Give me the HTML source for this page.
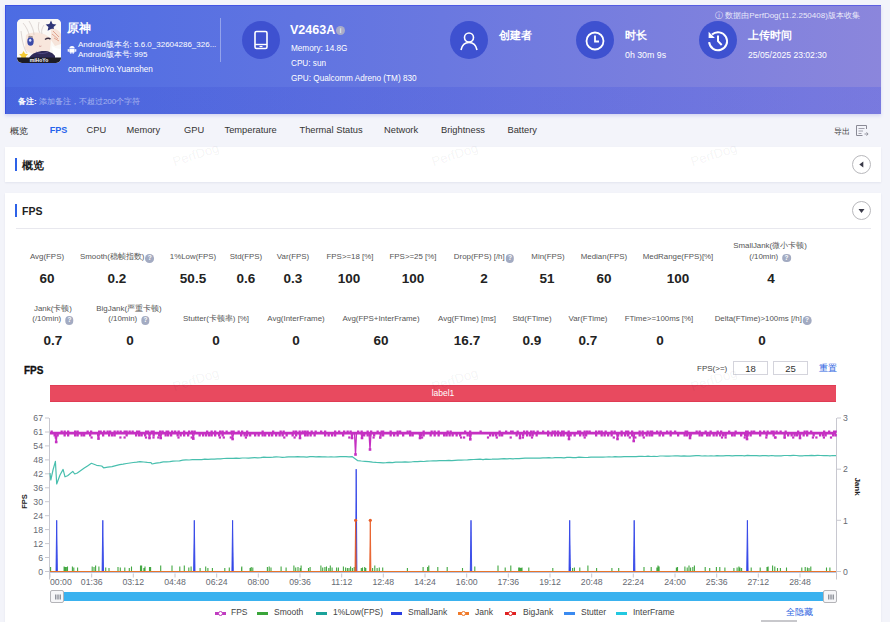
<!DOCTYPE html>
<html><head><meta charset="utf-8">
<style>
*{margin:0;padding:0;box-sizing:border-box}
html,body{width:890px;height:622px;overflow:hidden}
body{background:#f3f4fa;font-family:"Liberation Sans",sans-serif;position:relative;color:#333}
.abs{position:absolute;white-space:nowrap}
#hdr{position:absolute;left:5px;top:5px;width:876px;height:109px;box-shadow:inset 1px 1px 0 rgba(40,50,230,0.45),0 2px 3px rgba(90,90,210,0.18);background:linear-gradient(90deg,#4c6ce3 0%,#6a78e0 50%,#8b86dc 100%);overflow:hidden}
#note{position:absolute;left:0;top:83px;width:876px;height:27px;background:linear-gradient(90deg,rgba(40,50,190,0.13),rgba(30,60,235,0.17))}
.w{color:#fff}
.circ{position:absolute;width:38px;height:38px;border-radius:50%;background:#3e51d0}
.ttl{font-size:12px;font-weight:bold;color:#fff}
.sm{font-size:8.2px;color:#fff}
.tab{position:absolute;top:124.7px;font-size:9.3px;color:#333}
.card{position:absolute;left:5px;width:876px;background:#fff;box-shadow:0 1px 2px rgba(20,30,90,0.07)}
.bar{position:absolute;width:2px;height:13px;background:#2d62e8}
.stitle{font-size:11px;font-weight:bold;color:#222}
.btn{position:absolute;width:19px;height:19px;border-radius:50%;border:1px solid #b8b8bc;background:#fff}
.lab{position:absolute;font-size:7.9px;color:#555;text-align:center;transform:translateX(-50%);white-space:nowrap;line-height:10px}
.val{position:absolute;font-size:13.5px;font-weight:bold;color:#222;transform:translateX(-50%);white-space:nowrap}
.q{display:inline-block;width:8.5px;height:8.5px;border-radius:50%;background:#a3abc2;color:#fff;font-size:6.5px;line-height:8.5px;text-align:center;font-weight:bold;vertical-align:-1px;margin-left:4px}
svg text.ax{font-family:"Liberation Sans",sans-serif;font-size:8.7px;fill:#666a72}
.wm{position:absolute;font-size:13px;color:rgba(0,0,0,0.055);transform:rotate(-18deg)}
</style></head><body>

<div id="hdr"><div style="position:absolute;left:0;top:-1px;width:876px;height:110px">
  <div id="note"></div>
  <!-- app icon -->
  <svg class="abs" style="left:12px;top:14.5px" width="44" height="44" viewBox="0 0 44 44">
    <defs><clipPath id="rc"><rect width="44" height="44" rx="5"/></clipPath></defs>
    <g clip-path="url(#rc)">
      <rect width="44" height="44" fill="#f6f1ea"/>
      <path d="M0 0h44v44H0z" fill="#fbf9f6"/>
      <path d="M9 16c2-2 8-3 14-2 5 1 9 3 11 7l-1 10c-3 3-8 4-13 4-6 0-10-2-12-6z" fill="#f8e6dc"/>
      <path d="M6 4c5 6 7 12 7 20M12 2c3 5 5 10 5 14M22 3c-1 4-1 8 1 11M4 12c1 8 2 16 6 22" fill="none" stroke="#c9c0bc" stroke-width="0.6"/>
      <path d="M27 6c-2 3-3 6-2 9" fill="none" stroke="#c9c0bc" stroke-width="0.6"/>
      <ellipse cx="13.5" cy="22.5" rx="3.2" ry="4.2" fill="#3b4aa8"/>
      <ellipse cx="13.2" cy="21.2" rx="1.2" ry="1.5" fill="#d8e0ff"/>
      <path d="M11 18.2q2.5-1.6 5 0" fill="none" stroke="#6a5a60" stroke-width="0.8"/>
      <path d="M28 20.5q3 -2.2 5.5 -0.4" fill="none" stroke="#3a2e40" stroke-width="1.5"/>
      <path d="M22 27q1.2 0.8 2.4 0" fill="none" stroke="#c08080" stroke-width="0.7"/>
      <path d="M34 1.5l1.6 3.4 3.8 0.6-2.8 2.5 0.8 3.8-3.4-1.9-3.4 1.9 0.8-3.8-2.8-2.5 3.8-0.6z" fill="#2e3678"/>
      <path d="M34 10c4-1 8 1 10 5v10l-6 2-4-6z" fill="#f6e4da"/>
      <path d="M36 12l6 6M35 15l6 5M37 19l5 3" stroke="#d88a70" stroke-width="0.7"/>
      <path d="M35 27c3 2 6 3 9 3v10h-7z" fill="#ffffff"/>
      <path d="M12 39c3-5 9-7 15-7 5 0 9 2 11 5v5H12z" fill="#2f2a58"/>
      <path d="M19 33c3 2 8 2 12 0" fill="none" stroke="#5a5290" stroke-width="0.8"/>
      <path d="M6.5 32l1.6 2.8 3 0.4-2.2 2 0.6 3-2.9-1.5-2.9 1.5 0.6-3-2.2-2 3-0.4z" fill="#f3ca36"/>
      <rect y="38.5" width="44" height="5.5" fill="#1d1c26"/>
      <text x="22" y="43.3" text-anchor="middle" font-size="5" font-weight="bold" fill="#fff" font-family="Liberation Sans">miHoYo</text>
    </g>
  </svg>
  <div class="abs ttl" style="left:62px;top:17px;font-size:11.5px">原神</div>
  <svg class="abs" style="left:62px;top:41px" width="10" height="9" viewBox="0 0 10 9"><path d="M2.3 3.6a2.7 2.5 0 0 1 5.4 0z" fill="#fff"/><rect x="2.3" y="4" width="5.4" height="3.6" rx="0.6" fill="#fff"/><rect x="0.7" y="4" width="1.2" height="2.8" rx="0.6" fill="#fff"/><rect x="8.1" y="4" width="1.2" height="2.8" rx="0.6" fill="#fff"/><rect x="3.3" y="7" width="1.1" height="1.8" fill="#fff"/><rect x="5.6" y="7" width="1.1" height="1.8" fill="#fff"/></svg>
  <div class="abs sm" style="left:73px;top:36px;line-height:9.5px;font-size:8px">Android版本名: 5.6.0_32604286_326...<br>Android版本号: 995</div>
  <div class="abs sm" style="left:63px;top:61px">com.miHoYo.Yuanshen</div>
  <div class="abs" style="left:215px;top:13.5px;width:1px;height:44px;background:rgba(255,255,255,0.35)"></div>

  <div class="circ" style="left:237px;top:17px"></div>
  <svg class="abs" style="left:247px;top:26px" width="18" height="20" viewBox="0 0 18 20"><rect x="3" y="1.5" width="12" height="17" rx="1.5" fill="none" stroke="#fff" stroke-width="1.6"/><line x1="3" y1="14.5" x2="15" y2="14.5" stroke="#fff" stroke-width="1.4"/><line x1="7.5" y1="16.5" x2="10.5" y2="16.5" stroke="#fff" stroke-width="1.2"/></svg>
  <div class="abs ttl" style="left:285px;top:19px;font-size:12.5px">V2463A</div>
  <div class="abs" style="left:331px;top:22px;width:9px;height:9px;border-radius:50%;background:#a9acc8;color:#fff;font-size:7px;line-height:9px;text-align:center">i</div>
  <div class="abs sm" style="left:286px;top:39.5px">Memory: 14.8G</div>
  <div class="abs sm" style="left:286px;top:55px">CPU: sun</div>
  <div class="abs sm" style="left:286px;top:69.5px">GPU: Qualcomm Adreno (TM) 830</div>

  <div class="circ" style="left:445px;top:17px"></div>
  <svg class="abs" style="left:453px;top:25.5px" width="22" height="22" viewBox="0 0 22 22"><circle cx="11" cy="7.5" r="4.5" fill="none" stroke="#fff" stroke-width="1.6"/><path d="M3 20c1-5 4-7.5 8-7.5s7 2.5 8 7.5" fill="none" stroke="#fff" stroke-width="1.6"/></svg>
  <div class="abs ttl" style="left:494px;top:24px;font-size:11.2px">创建者</div>

  <div class="circ" style="left:571px;top:17px"></div>
  <svg class="abs" style="left:579px;top:26px" width="22" height="22" viewBox="0 0 22 22"><circle cx="11" cy="11" r="8.5" fill="none" stroke="#fff" stroke-width="1.8"/><path d="M11 5.5v6h4" fill="none" stroke="#fff" stroke-width="1.8"/></svg>
  <div class="abs ttl" style="left:620px;top:24px;font-size:11.2px">时长</div>
  <div class="abs sm" style="left:620px;top:45.5px;font-size:8.8px">0h 30m 9s</div>

  <div class="circ" style="left:694px;top:17px"></div>
  <svg class="abs" style="left:701px;top:24.7px" width="24" height="24" viewBox="0 0 24 24"><path d="M6 5.6A9 9 0 1 1 3.1 13.2" fill="none" stroke="#fff" stroke-width="2"/><path d="M2.6 2.8v6.3h6.3z" fill="#fff"/><path d="M12 6.6v5.6l3.7 3.8" fill="none" stroke="#fff" stroke-width="2"/></svg>
  <div class="abs ttl" style="left:743px;top:24px;font-size:11.2px">上传时间</div>
  <div class="abs sm" style="left:743px;top:45.5px;font-size:8.6px">25/05/2025 23:02:30</div>

  <div class="abs" style="left:710px;top:6px;font-size:8px;color:rgba(255,255,255,0.85)">ⓘ 数据由PerfDog(11.2.250408)版本收集</div>

  <div class="abs" style="left:13px;top:92px;font-size:8px;color:#fff;font-weight:bold">备注:<span style="font-weight:normal;color:rgba(255,255,255,0.5)"> 添加备注，不超过200个字符</span></div>
</div></div>

<!-- tabs -->
<div class="tab" style="left:10px;font-size:8.8px;top:125.5px">概览</div>
<div class="tab" style="left:49.8px;top:125px;color:#2563ec;font-weight:bold;font-size:9px">FPS</div>
<div class="tab" style="left:86.5px">CPU</div>
<div class="tab" style="left:126.5px">Memory</div>
<div class="tab" style="left:184px">GPU</div>
<div class="tab" style="left:224.5px">Temperature</div>
<div class="tab" style="left:299.5px">Thermal Status</div>
<div class="tab" style="left:384px">Network</div>
<div class="tab" style="left:441px">Brightness</div>
<div class="tab" style="left:507.5px">Battery</div>
<div class="abs" style="left:834px;top:125.5px;font-size:8px;color:#444">导出</div>
<svg class="abs" style="left:855px;top:124px" width="14" height="13" viewBox="0 0 14 13"><path d="M11.5 5V1.5h-10v10h6" fill="none" stroke="#8a8a96" stroke-width="1"/><path d="M3.5 4.5h6M3.5 7h4.5M3.5 9.5h3" stroke="#9a9aa6" stroke-width="0.9"/><path d="M9.5 10h3.5M11.5 8.3l1.6 1.7-1.6 1.7" fill="none" stroke="#8a8a96" stroke-width="0.9"/></svg>

<!-- card 1 -->
<div class="card" style="top:147px;height:35px"></div>
<div class="bar" style="left:15px;top:158px"></div>
<div class="abs stitle" style="left:22px;top:158px">概览</div>
<div class="btn" style="left:852px;top:155px"></div>
<svg class="abs" style="left:852px;top:155px" width="19" height="19"><path d="M7.3 9.5l4-3v6z" fill="#3a3a48"/></svg>

<!-- card 2 -->
<div class="card" style="top:193px;height:440px"></div>
<div class="bar" style="left:15px;top:204px"></div>
<div class="abs stitle" style="left:22px;top:204.5px;font-size:10.5px">FPS</div>
<div class="btn" style="left:852px;top:201px"></div>
<svg class="abs" style="left:852px;top:201px" width="19" height="19"><path d="M6.5 8h6l-3 4z" fill="#3a3a48"/></svg>
<div class="abs" style="left:16px;top:228px;width:855px;height:1px;background:#e8e8ee"></div>

<!-- metrics row 1 -->
<div class="lab" style="left:47px;top:252px">Avg(FPS)</div><div class="val" style="left:47px;top:271px">60</div>
<div class="lab" style="left:117px;top:252px">Smooth(稳帧指数)<span class="q" style="margin-left:1px">?</span></div><div class="val" style="left:117px;top:271px">0.2</div>
<div class="lab" style="left:193px;top:252px">1%Low(FPS)</div><div class="val" style="left:193px;top:271px">50.5</div>
<div class="lab" style="left:246px;top:252px">Std(FPS)</div><div class="val" style="left:246px;top:271px">0.6</div>
<div class="lab" style="left:293px;top:252px">Var(FPS)</div><div class="val" style="left:293px;top:271px">0.3</div>
<div class="lab" style="left:350px;top:252px">FPS&gt;=18 [%]</div><div class="val" style="left:349px;top:271px">100</div>
<div class="lab" style="left:413px;top:252px">FPS&gt;=25 [%]</div><div class="val" style="left:413px;top:271px">100</div>
<div class="lab" style="left:484px;top:252px">Drop(FPS) [/h]<span class="q" style="margin-left:1px">?</span></div><div class="val" style="left:484px;top:271px">2</div>
<div class="lab" style="left:548px;top:252px">Min(FPS)</div><div class="val" style="left:547px;top:271px">51</div>
<div class="lab" style="left:604px;top:252px">Median(FPS)</div><div class="val" style="left:604px;top:271px">60</div>
<div class="lab" style="left:678px;top:252px">MedRange(FPS)[%]</div><div class="val" style="left:678px;top:271px">100</div>
<div class="lab" style="left:770px;top:241px;line-height:10.5px">SmallJank(微小卡顿)<br>(/10min)<span class="q">?</span></div><div class="val" style="left:771px;top:271px">4</div>

<!-- metrics row 2 -->
<div class="lab" style="left:53px;top:303.5px;line-height:10.5px">Jank(卡顿)<br>(/10min)<span class="q">?</span></div><div class="val" style="left:53px;top:333px">0.7</div>
<div class="lab" style="left:129px;top:303.5px;line-height:10.5px">BigJank(严重卡顿)<br>(/10min)<span class="q">?</span></div><div class="val" style="left:130px;top:333px">0</div>
<div class="lab" style="left:216px;top:314px">Stutter(卡顿率) [%]</div><div class="val" style="left:216px;top:333px">0</div>
<div class="lab" style="left:296px;top:314px">Avg(InterFrame)</div><div class="val" style="left:296px;top:333px">0</div>
<div class="lab" style="left:381px;top:314px">Avg(FPS+InterFrame)</div><div class="val" style="left:381px;top:333px">60</div>
<div class="lab" style="left:467px;top:314px">Avg(FTime) [ms]</div><div class="val" style="left:467px;top:333px">16.7</div>
<div class="lab" style="left:532px;top:314px">Std(FTime)</div><div class="val" style="left:532px;top:333px">0.9</div>
<div class="lab" style="left:588px;top:314px">Var(FTime)</div><div class="val" style="left:588px;top:333px">0.7</div>
<div class="lab" style="left:659px;top:314px">FTime&gt;=100ms [%]</div><div class="val" style="left:660px;top:333px">0</div>
<div class="lab" style="left:763px;top:314px">Delta(FTime)&gt;100ms [/h]<span class="q" style="margin-left:1px">?</span></div><div class="val" style="left:762px;top:333px">0</div>

<!-- chart header -->
<div class="abs" style="left:24px;top:364.5px;font-size:10px;font-weight:bold;color:#111;-webkit-text-stroke:0.3px #111">FPS</div>
<div class="abs" style="left:697px;top:364px;font-size:8px;color:#444">FPS(&gt;=)</div>
<div class="abs" style="left:733px;top:361px;width:35px;height:14px;border:1px solid #d4d4dc;font-size:9.5px;text-align:center;line-height:13px;color:#333">18</div>
<div class="abs" style="left:773px;top:361px;width:35px;height:14px;border:1px solid #d4d4dc;font-size:9.5px;text-align:center;line-height:13px;color:#333">25</div>
<div class="abs" style="left:819px;top:363px;font-size:8.5px;color:#2a62e0">重置</div>
<div class="abs" style="left:50px;top:385px;width:786px;height:17px;background:#e84a5f;color:#fff;font-size:8.5px;text-align:center;line-height:17px;box-shadow:inset 0 1px 0 #e03c54,inset 0 -1px 0 #e03c54">label1</div>

<svg class="abs" style="left:0;top:0" width="890" height="622">
<line x1="49.5" y1="418.0" x2="49.5" y2="579.5" stroke="#c8c8d0" stroke-width="1"/>
<line x1="836.5" y1="418.0" x2="836.5" y2="579.5" stroke="#c8c8d0" stroke-width="1"/>
<line x1="45" y1="571.5" x2="49" y2="571.5" stroke="#c8c8d0"/>
<text x="43" y="574.7" text-anchor="end" class="ax">0</text>
<line x1="45" y1="557.5" x2="49" y2="557.5" stroke="#c8c8d0"/>
<text x="43" y="560.7" text-anchor="end" class="ax">6</text>
<line x1="45" y1="543.6" x2="49" y2="543.6" stroke="#c8c8d0"/>
<text x="43" y="546.8" text-anchor="end" class="ax">12</text>
<line x1="45" y1="529.6" x2="49" y2="529.6" stroke="#c8c8d0"/>
<text x="43" y="532.8" text-anchor="end" class="ax">18</text>
<line x1="45" y1="515.7" x2="49" y2="515.7" stroke="#c8c8d0"/>
<text x="43" y="518.9" text-anchor="end" class="ax">24</text>
<line x1="45" y1="501.7" x2="49" y2="501.7" stroke="#c8c8d0"/>
<text x="43" y="504.9" text-anchor="end" class="ax">30</text>
<line x1="45" y1="487.8" x2="49" y2="487.8" stroke="#c8c8d0"/>
<text x="43" y="491.0" text-anchor="end" class="ax">36</text>
<line x1="45" y1="473.8" x2="49" y2="473.8" stroke="#c8c8d0"/>
<text x="43" y="477.0" text-anchor="end" class="ax">42</text>
<line x1="45" y1="459.9" x2="49" y2="459.9" stroke="#c8c8d0"/>
<text x="43" y="463.1" text-anchor="end" class="ax">48</text>
<line x1="45" y1="445.9" x2="49" y2="445.9" stroke="#c8c8d0"/>
<text x="43" y="449.1" text-anchor="end" class="ax">54</text>
<line x1="45" y1="432.0" x2="49" y2="432.0" stroke="#c8c8d0"/>
<text x="43" y="435.2" text-anchor="end" class="ax">61</text>
<line x1="45" y1="418.0" x2="49" y2="418.0" stroke="#c8c8d0"/>
<text x="43" y="421.2" text-anchor="end" class="ax">67</text>
<line x1="837" y1="571.5" x2="841" y2="571.5" stroke="#c8c8d0"/>
<text x="843" y="574.7" class="ax">0</text>
<line x1="837" y1="520.3" x2="841" y2="520.3" stroke="#c8c8d0"/>
<text x="843" y="523.5" class="ax">1</text>
<line x1="837" y1="469.2" x2="841" y2="469.2" stroke="#c8c8d0"/>
<text x="843" y="472.4" class="ax">2</text>
<line x1="837" y1="418.0" x2="841" y2="418.0" stroke="#c8c8d0"/>
<text x="843" y="421.2" class="ax">3</text>
<line x1="50" y1="572.5" x2="836" y2="572.5" stroke="#b8c4e0"/>
<line x1="50.0" y1="573.5" x2="50.0" y2="577.5" stroke="#c8c8d0"/>
<text x="50.0" y="584.5" class="ax">00:00</text>
<line x1="91.7" y1="573.5" x2="91.7" y2="577.5" stroke="#c8c8d0"/>
<text x="91.7" y="584.5" text-anchor="middle" class="ax">01:36</text>
<line x1="133.3" y1="573.5" x2="133.3" y2="577.5" stroke="#c8c8d0"/>
<text x="133.3" y="584.5" text-anchor="middle" class="ax">03:12</text>
<line x1="175.0" y1="573.5" x2="175.0" y2="577.5" stroke="#c8c8d0"/>
<text x="175.0" y="584.5" text-anchor="middle" class="ax">04:48</text>
<line x1="216.7" y1="573.5" x2="216.7" y2="577.5" stroke="#c8c8d0"/>
<text x="216.7" y="584.5" text-anchor="middle" class="ax">06:24</text>
<line x1="258.3" y1="573.5" x2="258.3" y2="577.5" stroke="#c8c8d0"/>
<text x="258.3" y="584.5" text-anchor="middle" class="ax">08:00</text>
<line x1="300.0" y1="573.5" x2="300.0" y2="577.5" stroke="#c8c8d0"/>
<text x="300.0" y="584.5" text-anchor="middle" class="ax">09:36</text>
<line x1="341.7" y1="573.5" x2="341.7" y2="577.5" stroke="#c8c8d0"/>
<text x="341.7" y="584.5" text-anchor="middle" class="ax">11:12</text>
<line x1="383.3" y1="573.5" x2="383.3" y2="577.5" stroke="#c8c8d0"/>
<text x="383.3" y="584.5" text-anchor="middle" class="ax">12:48</text>
<line x1="425.0" y1="573.5" x2="425.0" y2="577.5" stroke="#c8c8d0"/>
<text x="425.0" y="584.5" text-anchor="middle" class="ax">14:24</text>
<line x1="466.7" y1="573.5" x2="466.7" y2="577.5" stroke="#c8c8d0"/>
<text x="466.7" y="584.5" text-anchor="middle" class="ax">16:00</text>
<line x1="508.3" y1="573.5" x2="508.3" y2="577.5" stroke="#c8c8d0"/>
<text x="508.3" y="584.5" text-anchor="middle" class="ax">17:36</text>
<line x1="550.0" y1="573.5" x2="550.0" y2="577.5" stroke="#c8c8d0"/>
<text x="550.0" y="584.5" text-anchor="middle" class="ax">19:12</text>
<line x1="591.7" y1="573.5" x2="591.7" y2="577.5" stroke="#c8c8d0"/>
<text x="591.7" y="584.5" text-anchor="middle" class="ax">20:48</text>
<line x1="633.3" y1="573.5" x2="633.3" y2="577.5" stroke="#c8c8d0"/>
<text x="633.3" y="584.5" text-anchor="middle" class="ax">22:24</text>
<line x1="675.0" y1="573.5" x2="675.0" y2="577.5" stroke="#c8c8d0"/>
<text x="675.0" y="584.5" text-anchor="middle" class="ax">24:00</text>
<line x1="716.7" y1="573.5" x2="716.7" y2="577.5" stroke="#c8c8d0"/>
<text x="716.7" y="584.5" text-anchor="middle" class="ax">25:36</text>
<line x1="758.3" y1="573.5" x2="758.3" y2="577.5" stroke="#c8c8d0"/>
<text x="758.3" y="584.5" text-anchor="middle" class="ax">27:12</text>
<line x1="800.0" y1="573.5" x2="800.0" y2="577.5" stroke="#c8c8d0"/>
<text x="800.0" y="584.5" text-anchor="middle" class="ax">28:48</text>
<path d="M50.6 571.5v-4.5 M64.1 571.5v-5 M65.2 571.5v-4.5 M66.3 571.5v-4.5 M67.5 571.5v-5 M72.4 571.5v-5 M73.8 571.5v-4 M77.6 571.5v-4 M92.2 571.5v-5 M94.0 571.5v-4.5 M95.6 571.5v-6 M98.9 571.5v-5 M105.7 571.5v-4 M109.0 571.5v-3.5 M118.0 571.5v-4.5 M120.3 571.5v-4 M124.8 571.5v-4 M129.3 571.5v-3.5 M131.5 571.5v-5 M140.5 571.5v-6 M141.6 571.5v-6 M143.9 571.5v-3.5 M145.0 571.5v-5 M149.5 571.5v-4.5 M150.6 571.5v-4.5 M160.7 571.5v-6 M172.0 571.5v-6 M179.8 571.5v-5 M184.3 571.5v-6 M188.8 571.5v-4 M191.1 571.5v-5 M200.1 571.5v-3.5 M205.7 571.5v-5 M207.9 571.5v-3.5 M212.4 571.5v-3.5 M224.8 571.5v-3.5 M229.3 571.5v-4 M241.6 571.5v-4 M241.8 571.5v-5 M250.1 571.5v-3.5 M251.2 571.5v-4.5 M252.8 571.5v-4 M267.4 571.5v-4.5 M269.2 571.5v-5 M271.0 571.5v-4 M281.1 571.5v-5 M286.1 571.5v-4 M293.9 571.5v-6 M295.7 571.5v-4 M298.0 571.5v-4.5 M300.2 571.5v-3.5 M301.1 571.5v-6 M308.5 571.5v-3.5 M310.1 571.5v-4.5 M320.9 571.5v-6 M322.7 571.5v-4 M324.9 571.5v-4.5 M326.5 571.5v-5 M328.8 571.5v-3.5 M330.3 571.5v-6 M332.1 571.5v-4 M336.6 571.5v-4 M338.4 571.5v-4 M343.4 571.5v-5 M345.6 571.5v-4 M347.4 571.5v-3.5 M349.0 571.5v-3.5 M350.6 571.5v-5 M352.4 571.5v-3.5 M354.2 571.5v-4.5 M361.3 571.5v-3.5 M362.5 571.5v-4 M364.7 571.5v-4.5 M365.8 571.5v-3.5 M372.6 571.5v-3.5 M374.8 571.5v-6 M377.1 571.5v-3.5 M379.3 571.5v-4 M382.7 571.5v-4 M407.4 571.5v-3.5 M423.1 571.5v-4.5 M427.6 571.5v-4.5 M428.8 571.5v-6 M437.8 571.5v-4.5 M447.2 571.5v-4.5 M462.5 571.5v-3.5 M474.8 571.5v-5 M498.0 571.5v-6 M505.2 571.5v-4 M510.8 571.5v-6 M518.7 571.5v-4 M519.8 571.5v-4 M520.9 571.5v-3.5 M522.0 571.5v-4 M528.8 571.5v-4 M552.8 571.5v-3.5 M570.3 571.5v-4.5 M572.6 571.5v-3.5 M574.4 571.5v-4 M579.8 571.5v-4 M587.9 571.5v-6 M596.6 571.5v-3.5 M611.9 571.5v-3.5 M618.7 571.5v-3.5 M644.0 571.5v-4.5 M651.2 571.5v-4.5 M656.9 571.5v-4 M658.0 571.5v-6 M659.1 571.5v-5 M676.4 571.5v-4 M677.5 571.5v-4.5 M684.9 571.5v-5 M687.2 571.5v-4 M689.0 571.5v-6 M690.6 571.5v-4 M692.8 571.5v-4.5 M694.4 571.5v-6 M705.2 571.5v-4.5 M709.7 571.5v-3.5 M716.4 571.5v-4.5 M719.8 571.5v-4.5 M724.9 571.5v-4 M733.9 571.5v-3.5 M737.1 571.5v-4 M738.9 571.5v-5 M740.0 571.5v-4 M741.6 571.5v-3.5 M751.2 571.5v-4 M760.2 571.5v-4 M767.0 571.5v-4.5 M768.1 571.5v-5 M772.6 571.5v-6 M774.8 571.5v-5 M777.5 571.5v-3.5 M780.4 571.5v-3.5 M786.5 571.5v-4 M801.8 571.5v-4 M805.2 571.5v-4.5 M807.4 571.5v-4 M809.0 571.5v-3.5 M810.8 571.5v-5 M826.5 571.5v-4 M829.9 571.5v-4" stroke="#43a843" stroke-width="1.1" fill="none"/>
<polyline points="50.0,473.0 50.8,480.0 53.0,470.0 55.4,461.4 56.7,484.0 60.0,475.0 63.1,469.4 65.0,476.8 67.6,475.8 72.8,471.4 74.7,474.0 77.3,473.0 80.8,470.6 84.3,468.1 87.9,465.7 91.4,463.3 96.6,465.3 101.7,466.0 103.6,467.8 107.8,467.2 112.0,466.6 115.8,465.6 119.7,464.6 123.1,464.1 126.6,463.5 130.0,463.0 133.3,462.5 136.7,462.1 140.0,461.6 143.7,462.0 147.3,462.4 151.0,462.7 152.0,464.0 156.0,463.2 160.0,462.6 163.2,461.9 166.5,461.8 169.8,461.6 173.0,461.1 176.2,461.0 179.5,460.8 182.8,460.1 186.0,459.9 189.1,460.0 192.3,459.7 195.4,459.5 198.6,459.6 201.7,459.6 204.9,459.2 208.0,459.3 211.1,459.2 214.3,459.1 217.4,458.9 220.6,458.8 223.7,458.5 226.9,458.4 230.0,458.3 233.1,458.4 236.2,458.2 239.2,458.3 242.3,458.0 245.4,458.0 248.5,458.1 251.5,457.8 254.6,457.7 257.7,457.8 260.8,457.7 263.8,457.2 266.9,457.3 270.0,457.3 273.1,457.2 276.2,456.9 279.2,457.0 282.3,457.3 285.4,457.2 288.5,456.8 291.5,456.9 294.6,456.8 297.7,456.7 300.8,456.8 303.8,456.9 306.9,457.1 310.0,456.6 313.0,456.6 316.0,456.8 319.0,456.7 322.0,456.9 325.0,456.8 328.0,457.0 331.0,456.8 334.0,457.0 337.0,456.8 340.0,456.7 343.0,456.7 346.0,456.6 349.0,456.8 352.0,456.6 357.5,460.6 361.3,461.0 365.0,461.3 368.8,461.6 372.5,462.1 376.3,462.4 380.0,462.6 383.1,462.9 386.2,462.7 389.4,462.3 392.5,462.6 395.6,462.2 398.8,462.0 401.9,462.1 405.0,461.8 408.1,462.1 411.2,462.0 414.4,461.5 417.5,461.6 420.6,461.3 423.8,461.5 426.9,461.2 430.0,461.0 433.1,460.9 436.2,460.8 439.4,460.7 442.5,460.6 445.6,460.6 448.8,460.4 451.9,460.6 455.0,460.4 458.1,460.2 461.2,460.1 464.4,460.0 467.5,459.9 470.6,459.7 473.8,459.5 476.9,459.3 480.0,459.2 483.0,459.6 486.0,459.1 489.0,459.3 492.0,459.2 495.0,459.0 498.0,459.2 501.0,458.8 504.0,458.7 507.0,458.8 510.0,458.7 513.0,458.8 516.0,458.5 519.0,458.7 522.0,458.4 525.0,458.2 528.0,458.2 531.0,458.1 534.0,458.2 537.0,458.2 540.0,458.1 543.0,457.8 546.0,457.8 549.0,457.7 552.0,458.0 555.0,457.6 558.0,457.5 561.0,457.6 564.0,457.8 567.0,457.3 570.0,457.3 573.0,457.7 576.0,457.6 579.0,457.2 582.0,457.3 585.0,457.5 588.0,457.4 591.0,457.1 594.0,457.1 597.0,457.1 600.0,457.1 603.0,457.1 606.0,457.0 609.0,456.8 612.0,457.0 615.0,456.7 618.0,456.8 621.0,456.8 624.0,456.6 627.0,456.6 630.0,456.7 633.0,456.6 636.0,456.6 639.0,456.4 642.0,456.3 645.0,456.5 648.0,456.2 651.0,456.5 654.0,456.4 657.0,456.5 660.0,456.0 663.0,456.0 666.0,456.2 669.0,456.2 672.0,456.0 675.0,455.9 678.0,455.9 681.0,456.2 684.0,455.9 687.0,456.1 690.0,456.1 693.0,455.9 696.0,455.7 699.0,455.7 702.0,456.0 705.0,455.8 708.0,456.0 711.0,455.8 714.0,456.0 717.0,455.6 720.0,455.9 723.1,455.8 726.1,455.6 729.2,455.6 732.2,455.9 735.3,455.6 738.3,455.7 741.4,455.5 744.4,455.9 747.5,455.4 750.5,455.7 753.6,455.7 756.6,455.7 759.7,455.8 762.7,455.6 765.8,455.6 768.8,455.9 771.9,455.5 774.9,455.8 778.0,455.8 781.1,455.9 784.1,455.5 787.2,455.5 790.2,455.6 793.3,455.4 796.3,455.5 799.4,455.9 802.4,455.8 805.5,455.5 808.5,455.7 811.6,455.4 814.6,455.6 817.7,455.4 820.7,455.5 823.8,455.6 826.8,455.5 829.9,455.8 832.9,455.5 836,455.6" stroke="#48bfae" stroke-width="1.2" fill="none" stroke-linejoin="round"/>
<path d="M56.0 571.5 L56.7 520.3 L57.4 571.5Z" fill="#3346e8" stroke="#3346e8" stroke-width="0.9"/>
<path d="M102.1 571.5 L102.8 520.3 L103.5 571.5Z" fill="#3346e8" stroke="#3346e8" stroke-width="0.9"/>
<path d="M193.6 571.5 L194.3 520.3 L195.0 571.5Z" fill="#3346e8" stroke="#3346e8" stroke-width="0.9"/>
<path d="M231.9 571.5 L232.6 520.3 L233.3 571.5Z" fill="#3346e8" stroke="#3346e8" stroke-width="0.9"/>
<path d="M355.5 571.5 L356.2 469.2 L356.9 571.5Z" fill="#3346e8" stroke="#3346e8" stroke-width="0.9"/>
<path d="M470.3 571.5 L471.0 520.3 L471.7 571.5Z" fill="#3346e8" stroke="#3346e8" stroke-width="0.9"/>
<path d="M569.0 571.5 L569.7 520.3 L570.4 571.5Z" fill="#3346e8" stroke="#3346e8" stroke-width="0.9"/>
<path d="M633.5 571.5 L634.2 520.3 L634.9 571.5Z" fill="#3346e8" stroke="#3346e8" stroke-width="0.9"/>
<path d="M746.7 571.5 L747.4 520.3 L748.1 571.5Z" fill="#3346e8" stroke="#3346e8" stroke-width="0.9"/>
<path d="M355.0 571.5 L355.6 520.3 L356.2 571.5Z" fill="#e8602a" stroke="#e8602a" stroke-width="0.9"/>
<circle cx="355.6" cy="520.3" r="1.6" fill="#e8602a"/>
<path d="M369.7 571.5 L370.3 520.3 L370.9 571.5Z" fill="#e8602a" stroke="#e8602a" stroke-width="0.9"/>
<circle cx="370.3" cy="520.3" r="1.6" fill="#e8602a"/>
<line x1="50" y1="571.5" x2="836" y2="571.5" stroke="#e8742a" stroke-width="1.2"/>
<line x1="50" y1="433.1" x2="836" y2="433.1" stroke="#c530c2" stroke-width="2.8"/>
<path d="M50.5 430.5h2.3v2.2h-2.3z M53.5 433.9h2.3v2.6h-2.3z M56.5 433.9h2.3v2.6h-2.3z M60.5 430.5h2.3v2.2h-2.3z M63.5 433.9h2.3v2.6h-2.3z M63.5 430.5h2.3v2.2h-2.3z M67.0 433.9h2.3v2.6h-2.3z M67.0 430.5h2.3v2.2h-2.3z M74.0 433.9h2.3v2.6h-2.3z M74.0 430.5h2.3v2.2h-2.3z M76.5 433.9h2.3v2.6h-2.3z M76.5 430.5h2.3v2.2h-2.3z M80.5 433.9h2.3v2.6h-2.3z M83.0 433.9h2.3v2.6h-2.3z M86.5 430.5h2.3v2.2h-2.3z M89.0 433.9h2.3v2.6h-2.3z M90.0 430.5h2.3v2.2h-2.3z M97.0 433.9h2.3v2.6h-2.3z M98.0 430.5h2.3v2.2h-2.3z M99.5 430.5h2.3v2.2h-2.3z M102.0 433.9h2.3v2.6h-2.3z M103.0 430.5h2.3v2.2h-2.3z M106.5 430.5h2.3v2.2h-2.3z M108.0 433.9h2.3v2.6h-2.3z M109.0 430.5h2.3v2.2h-2.3z M111.0 433.9h2.3v2.6h-2.3z M113.5 433.9h2.3v2.6h-2.3z M113.5 430.5h2.3v2.2h-2.3z M116.5 430.5h2.3v2.2h-2.3z M119.5 430.5h2.3v2.2h-2.3z M123.5 430.5h2.3v2.2h-2.3z M125.5 433.9h2.3v2.6h-2.3z M125.5 430.5h2.3v2.2h-2.3z M128.5 430.5h2.3v2.2h-2.3z M131.5 430.5h2.3v2.2h-2.3z M135.0 433.9h2.3v2.6h-2.3z M136.0 430.5h2.3v2.2h-2.3z M138.0 433.9h2.3v2.6h-2.3z M138.0 430.5h2.3v2.2h-2.3z M140.5 433.9h2.3v2.6h-2.3z M144.0 433.9h2.3v2.6h-2.3z M145.0 430.5h2.3v2.2h-2.3z M147.0 430.5h2.3v2.2h-2.3z M150.5 430.5h2.3v2.2h-2.3z M152.5 433.9h2.3v2.6h-2.3z M152.5 430.5h2.3v2.2h-2.3z M158.0 433.9h2.3v2.6h-2.3z M159.0 430.5h2.3v2.2h-2.3z M161.5 430.5h2.3v2.2h-2.3z M164.5 433.9h2.3v2.6h-2.3z M165.5 430.5h2.3v2.2h-2.3z M167.0 433.9h2.3v2.6h-2.3z M167.0 430.5h2.3v2.2h-2.3z M170.0 433.9h2.3v2.6h-2.3z M171.0 430.5h2.3v2.2h-2.3z M174.0 430.5h2.3v2.2h-2.3z M176.5 433.9h2.3v2.6h-2.3z M177.5 430.5h2.3v2.2h-2.3z M179.5 433.9h2.3v2.6h-2.3z M183.0 433.9h2.3v2.6h-2.3z M183.0 430.5h2.3v2.2h-2.3z M187.0 433.9h2.3v2.6h-2.3z M188.0 430.5h2.3v2.2h-2.3z M191.0 430.5h2.3v2.2h-2.3z M193.5 430.5h2.3v2.2h-2.3z M198.5 433.9h2.3v2.6h-2.3z M202.0 433.9h2.3v2.6h-2.3z M205.0 433.9h2.3v2.6h-2.3z M206.0 430.5h2.3v2.2h-2.3z M208.0 433.9h2.3v2.6h-2.3z M210.5 433.9h2.3v2.6h-2.3z M210.5 430.5h2.3v2.2h-2.3z M214.0 433.9h2.3v2.6h-2.3z M214.0 430.5h2.3v2.2h-2.3z M218.0 433.9h2.3v2.6h-2.3z M219.0 430.5h2.3v2.2h-2.3z M221.5 433.9h2.3v2.6h-2.3z M221.5 430.5h2.3v2.2h-2.3z M225.5 430.5h2.3v2.2h-2.3z M230.5 430.5h2.3v2.2h-2.3z M232.5 430.5h2.3v2.2h-2.3z M237.5 430.5h2.3v2.2h-2.3z M240.0 433.9h2.3v2.6h-2.3z M241.0 430.5h2.3v2.2h-2.3z M243.5 433.9h2.3v2.6h-2.3z M246.0 433.9h2.3v2.6h-2.3z M246.0 430.5h2.3v2.2h-2.3z M249.0 433.9h2.3v2.6h-2.3z M254.0 433.9h2.3v2.6h-2.3z M257.5 433.9h2.3v2.6h-2.3z M261.5 433.9h2.3v2.6h-2.3z M261.5 430.5h2.3v2.2h-2.3z M264.0 433.9h2.3v2.6h-2.3z M268.0 433.9h2.3v2.6h-2.3z M271.0 433.9h2.3v2.6h-2.3z M272.0 430.5h2.3v2.2h-2.3z M275.0 433.9h2.3v2.6h-2.3z M278.5 433.9h2.3v2.6h-2.3z M279.5 430.5h2.3v2.2h-2.3z M281.5 433.9h2.3v2.6h-2.3z M282.5 430.5h2.3v2.2h-2.3z M285.5 433.9h2.3v2.6h-2.3z M291.5 433.9h2.3v2.6h-2.3z M292.5 430.5h2.3v2.2h-2.3z M295.0 433.9h2.3v2.6h-2.3z M295.0 430.5h2.3v2.2h-2.3z M298.5 430.5h2.3v2.2h-2.3z M301.5 430.5h2.3v2.2h-2.3z M304.0 433.9h2.3v2.6h-2.3z M304.0 430.5h2.3v2.2h-2.3z M306.5 433.9h2.3v2.6h-2.3z M306.5 430.5h2.3v2.2h-2.3z M309.5 433.9h2.3v2.6h-2.3z M310.5 430.5h2.3v2.2h-2.3z M313.5 433.9h2.3v2.6h-2.3z M314.5 430.5h2.3v2.2h-2.3z M320.0 430.5h2.3v2.2h-2.3z M324.0 433.9h2.3v2.6h-2.3z M324.0 430.5h2.3v2.2h-2.3z M327.5 433.9h2.3v2.6h-2.3z M331.0 433.9h2.3v2.6h-2.3z M334.0 433.9h2.3v2.6h-2.3z M334.0 430.5h2.3v2.2h-2.3z M338.0 430.5h2.3v2.2h-2.3z M342.0 433.9h2.3v2.6h-2.3z M343.0 430.5h2.3v2.2h-2.3z M346.5 430.5h2.3v2.2h-2.3z M349.5 430.5h2.3v2.2h-2.3z M357.0 430.5h2.3v2.2h-2.3z M360.5 430.5h2.3v2.2h-2.3z M363.0 433.9h2.3v2.6h-2.3z M366.5 433.9h2.3v2.6h-2.3z M366.5 430.5h2.3v2.2h-2.3z M369.0 433.9h2.3v2.6h-2.3z M370.0 430.5h2.3v2.2h-2.3z M373.0 433.9h2.3v2.6h-2.3z M376.5 430.5h2.3v2.2h-2.3z M379.5 433.9h2.3v2.6h-2.3z M380.5 430.5h2.3v2.2h-2.3z M382.0 433.9h2.3v2.6h-2.3z M382.0 430.5h2.3v2.2h-2.3z M389.5 433.9h2.3v2.6h-2.3z M389.5 430.5h2.3v2.2h-2.3z M393.0 433.9h2.3v2.6h-2.3z M396.5 433.9h2.3v2.6h-2.3z M396.5 430.5h2.3v2.2h-2.3z M399.0 430.5h2.3v2.2h-2.3z M402.0 433.9h2.3v2.6h-2.3z M406.5 430.5h2.3v2.2h-2.3z M409.0 433.9h2.3v2.6h-2.3z M409.0 430.5h2.3v2.2h-2.3z M411.5 433.9h2.3v2.6h-2.3z M420.0 433.9h2.3v2.6h-2.3z M422.5 433.9h2.3v2.6h-2.3z M422.5 430.5h2.3v2.2h-2.3z M429.5 433.9h2.3v2.6h-2.3z M430.5 430.5h2.3v2.2h-2.3z M433.5 433.9h2.3v2.6h-2.3z M433.5 430.5h2.3v2.2h-2.3z M437.5 433.9h2.3v2.6h-2.3z M437.5 430.5h2.3v2.2h-2.3z M443.0 433.9h2.3v2.6h-2.3z M445.5 433.9h2.3v2.6h-2.3z M446.5 430.5h2.3v2.2h-2.3z M448.5 433.9h2.3v2.6h-2.3z M449.5 430.5h2.3v2.2h-2.3z M451.5 433.9h2.3v2.6h-2.3z M455.5 433.9h2.3v2.6h-2.3z M459.0 433.9h2.3v2.6h-2.3z M464.0 430.5h2.3v2.2h-2.3z M466.5 433.9h2.3v2.6h-2.3z M469.0 433.9h2.3v2.6h-2.3z M469.0 430.5h2.3v2.2h-2.3z M479.5 430.5h2.3v2.2h-2.3z M489.0 433.9h2.3v2.6h-2.3z M492.0 433.9h2.3v2.6h-2.3z M495.0 433.9h2.3v2.6h-2.3z M498.5 433.9h2.3v2.6h-2.3z M498.5 430.5h2.3v2.2h-2.3z M501.0 433.9h2.3v2.6h-2.3z M505.0 430.5h2.3v2.2h-2.3z M510.0 430.5h2.3v2.2h-2.3z M511.5 430.5h2.3v2.2h-2.3z M515.5 433.9h2.3v2.6h-2.3z M516.5 430.5h2.3v2.2h-2.3z M522.0 433.9h2.3v2.6h-2.3z M523.0 430.5h2.3v2.2h-2.3z M526.0 433.9h2.3v2.6h-2.3z M526.0 430.5h2.3v2.2h-2.3z M529.0 433.9h2.3v2.6h-2.3z M530.0 430.5h2.3v2.2h-2.3z M531.5 433.9h2.3v2.6h-2.3z M532.5 430.5h2.3v2.2h-2.3z M535.5 433.9h2.3v2.6h-2.3z M536.5 430.5h2.3v2.2h-2.3z M542.0 430.5h2.3v2.2h-2.3z M547.0 433.9h2.3v2.6h-2.3z M547.0 430.5h2.3v2.2h-2.3z M550.5 433.9h2.3v2.6h-2.3z M551.5 430.5h2.3v2.2h-2.3z M554.0 433.9h2.3v2.6h-2.3z M554.0 430.5h2.3v2.2h-2.3z M557.0 433.9h2.3v2.6h-2.3z M557.0 430.5h2.3v2.2h-2.3z M560.0 433.9h2.3v2.6h-2.3z M561.0 430.5h2.3v2.2h-2.3z M562.5 433.9h2.3v2.6h-2.3z M562.5 430.5h2.3v2.2h-2.3z M566.5 433.9h2.3v2.6h-2.3z M567.5 430.5h2.3v2.2h-2.3z M569.5 433.9h2.3v2.6h-2.3z M573.5 433.9h2.3v2.6h-2.3z M577.0 430.5h2.3v2.2h-2.3z M579.0 433.9h2.3v2.6h-2.3z M579.0 430.5h2.3v2.2h-2.3z M582.5 433.9h2.3v2.6h-2.3z M583.5 430.5h2.3v2.2h-2.3z M585.0 433.9h2.3v2.6h-2.3z M586.0 430.5h2.3v2.2h-2.3z M588.5 430.5h2.3v2.2h-2.3z M595.0 433.9h2.3v2.6h-2.3z M595.0 430.5h2.3v2.2h-2.3z M598.0 430.5h2.3v2.2h-2.3z M600.5 433.9h2.3v2.6h-2.3z M600.5 430.5h2.3v2.2h-2.3z M603.5 433.9h2.3v2.6h-2.3z M604.5 430.5h2.3v2.2h-2.3z M607.0 433.9h2.3v2.6h-2.3z M610.5 433.9h2.3v2.6h-2.3z M610.5 430.5h2.3v2.2h-2.3z M613.5 430.5h2.3v2.2h-2.3z M617.0 433.9h2.3v2.6h-2.3z M620.5 433.9h2.3v2.6h-2.3z M620.5 430.5h2.3v2.2h-2.3z M624.0 433.9h2.3v2.6h-2.3z M625.0 430.5h2.3v2.2h-2.3z M627.0 433.9h2.3v2.6h-2.3z M627.0 430.5h2.3v2.2h-2.3z M631.0 433.9h2.3v2.6h-2.3z M631.0 430.5h2.3v2.2h-2.3z M638.5 433.9h2.3v2.6h-2.3z M638.5 430.5h2.3v2.2h-2.3z M641.5 433.9h2.3v2.6h-2.3z M641.5 430.5h2.3v2.2h-2.3z M645.5 433.9h2.3v2.6h-2.3z M646.5 430.5h2.3v2.2h-2.3z M648.5 433.9h2.3v2.6h-2.3z M649.5 430.5h2.3v2.2h-2.3z M651.0 433.9h2.3v2.6h-2.3z M651.0 430.5h2.3v2.2h-2.3z M656.0 430.5h2.3v2.2h-2.3z M658.5 433.9h2.3v2.6h-2.3z M659.5 430.5h2.3v2.2h-2.3z M662.0 433.9h2.3v2.6h-2.3z M666.0 430.5h2.3v2.2h-2.3z M669.5 433.9h2.3v2.6h-2.3z M669.5 430.5h2.3v2.2h-2.3z M674.0 430.5h2.3v2.2h-2.3z M677.0 433.9h2.3v2.6h-2.3z M683.5 433.9h2.3v2.6h-2.3z M684.5 430.5h2.3v2.2h-2.3z M686.0 433.9h2.3v2.6h-2.3z M686.0 430.5h2.3v2.2h-2.3z M689.5 433.9h2.3v2.6h-2.3z M695.5 430.5h2.3v2.2h-2.3z M698.5 433.9h2.3v2.6h-2.3z M698.5 430.5h2.3v2.2h-2.3z M701.0 433.9h2.3v2.6h-2.3z M704.5 430.5h2.3v2.2h-2.3z M706.0 433.9h2.3v2.6h-2.3z M708.5 433.9h2.3v2.6h-2.3z M709.5 430.5h2.3v2.2h-2.3z M712.5 433.9h2.3v2.6h-2.3z M715.5 433.9h2.3v2.6h-2.3z M716.5 430.5h2.3v2.2h-2.3z M719.0 433.9h2.3v2.6h-2.3z M720.0 430.5h2.3v2.2h-2.3z M722.0 433.9h2.3v2.6h-2.3z M724.5 433.9h2.3v2.6h-2.3z M728.0 430.5h2.3v2.2h-2.3z M731.0 433.9h2.3v2.6h-2.3z M733.5 433.9h2.3v2.6h-2.3z M734.5 430.5h2.3v2.2h-2.3z M740.0 433.9h2.3v2.6h-2.3z M744.0 433.9h2.3v2.6h-2.3z M745.0 430.5h2.3v2.2h-2.3z M746.5 433.9h2.3v2.6h-2.3z M746.5 430.5h2.3v2.2h-2.3z M749.5 433.9h2.3v2.6h-2.3z M750.5 430.5h2.3v2.2h-2.3z M753.0 430.5h2.3v2.2h-2.3z M759.0 433.9h2.3v2.6h-2.3z M759.0 430.5h2.3v2.2h-2.3z M763.0 430.5h2.3v2.2h-2.3z M765.5 433.9h2.3v2.6h-2.3z M766.5 430.5h2.3v2.2h-2.3z M770.5 430.5h2.3v2.2h-2.3z M772.5 433.9h2.3v2.6h-2.3z M772.5 430.5h2.3v2.2h-2.3z M775.5 430.5h2.3v2.2h-2.3z M779.5 430.5h2.3v2.2h-2.3z M783.5 433.9h2.3v2.6h-2.3z M784.5 430.5h2.3v2.2h-2.3z M787.0 433.9h2.3v2.6h-2.3z M790.5 433.9h2.3v2.6h-2.3z M793.5 433.9h2.3v2.6h-2.3z M796.0 433.9h2.3v2.6h-2.3z M797.0 430.5h2.3v2.2h-2.3z M802.5 433.9h2.3v2.6h-2.3z M803.5 430.5h2.3v2.2h-2.3z M806.0 433.9h2.3v2.6h-2.3z M806.0 430.5h2.3v2.2h-2.3z M810.0 430.5h2.3v2.2h-2.3z M812.5 433.9h2.3v2.6h-2.3z M819.0 433.9h2.3v2.6h-2.3z M822.0 433.9h2.3v2.6h-2.3z M823.0 430.5h2.3v2.2h-2.3z M824.5 433.9h2.3v2.6h-2.3z M828.0 430.5h2.3v2.2h-2.3z M832.0 433.9h2.3v2.6h-2.3z M833.0 430.5h2.3v2.2h-2.3z M834.5 433.9h2.3v2.6h-2.3z M834.5 430.5h2.3v2.2h-2.3z" fill="#c530c2"/>
<path d="M55.2 433.1 L56.2 442.0 L57.2 433.1" stroke="#c530c2" stroke-width="1.3" fill="none"/>
<rect x="54.9" y="440.7" width="2.6" height="2.6" fill="#c530c2"/>
<path d="M97.5 433.1 L98.5 438.6 L99.5 433.1" stroke="#c530c2" stroke-width="1.3" fill="none"/>
<rect x="97.2" y="437.3" width="2.6" height="2.6" fill="#c530c2"/>
<path d="M148.5 433.1 L149.5 438.0 L150.5 433.1" stroke="#c530c2" stroke-width="1.3" fill="none"/>
<rect x="148.2" y="436.7" width="2.6" height="2.6" fill="#c530c2"/>
<path d="M159.7 433.1 L160.7 438.0 L161.7 433.1" stroke="#c530c2" stroke-width="1.3" fill="none"/>
<rect x="159.4" y="436.7" width="2.6" height="2.6" fill="#c530c2"/>
<path d="M192.3 433.1 L193.3 438.6 L194.3 433.1" stroke="#c530c2" stroke-width="1.3" fill="none"/>
<rect x="192.0" y="437.3" width="2.6" height="2.6" fill="#c530c2"/>
<path d="M231.6 433.1 L232.6 439.0 L233.6 433.1" stroke="#c530c2" stroke-width="1.3" fill="none"/>
<rect x="231.3" y="437.7" width="2.6" height="2.6" fill="#c530c2"/>
<path d="M469.3 433.1 L470.3 439.3 L471.3 433.1" stroke="#c530c2" stroke-width="1.3" fill="none"/>
<rect x="469.0" y="438.0" width="2.6" height="2.6" fill="#c530c2"/>
<path d="M568.0 433.1 L569.0 439.0 L570.0 433.1" stroke="#c530c2" stroke-width="1.3" fill="none"/>
<rect x="567.7" y="437.7" width="2.6" height="2.6" fill="#c530c2"/>
<path d="M616.5 433.1 L617.5 439.0 L618.5 433.1" stroke="#c530c2" stroke-width="1.3" fill="none"/>
<rect x="616.2" y="437.7" width="2.6" height="2.6" fill="#c530c2"/>
<path d="M632.7 433.1 L633.7 441.0 L634.7 433.1" stroke="#c530c2" stroke-width="1.3" fill="none"/>
<rect x="632.4" y="439.7" width="2.6" height="2.6" fill="#c530c2"/>
<path d="M746.0 433.1 L747.0 439.0 L748.0 433.1" stroke="#c530c2" stroke-width="1.3" fill="none"/>
<rect x="745.7" y="437.7" width="2.6" height="2.6" fill="#c530c2"/>
<path d="M354.5 433.1 L355.5 454.5 L356.5 433.1" stroke="#c530c2" stroke-width="1.3" fill="none"/>
<rect x="354.2" y="453.2" width="2.6" height="2.6" fill="#c530c2"/>
<path d="M369.0 433.1 L370.0 449.5 L371.0 433.1" stroke="#c530c2" stroke-width="1.3" fill="none"/>
<rect x="368.7" y="448.2" width="2.6" height="2.6" fill="#c530c2"/>
<path d="M351.0 433.1 L352.0 438.0 L353.0 433.1" stroke="#c530c2" stroke-width="1.3" fill="none"/>
<rect x="350.7" y="436.7" width="2.6" height="2.6" fill="#c530c2"/>
<path d="M361.0 433.1 L362.0 438.0 L363.0 433.1" stroke="#c530c2" stroke-width="1.3" fill="none"/>
<rect x="360.7" y="436.7" width="2.6" height="2.6" fill="#c530c2"/>
<path d="M299.0 433.1 L300.0 438.0 L301.0 433.1" stroke="#c530c2" stroke-width="1.3" fill="none"/>
<rect x="298.7" y="436.7" width="2.6" height="2.6" fill="#c530c2"/>
<path d="M419.0 433.1 L420.0 438.0 L421.0 433.1" stroke="#c530c2" stroke-width="1.3" fill="none"/>
<rect x="418.7" y="436.7" width="2.6" height="2.6" fill="#c530c2"/>
<path d="M519.0 433.1 L520.0 438.0 L521.0 433.1" stroke="#c530c2" stroke-width="1.3" fill="none"/>
<rect x="518.7" y="436.7" width="2.6" height="2.6" fill="#c530c2"/>
<path d="M689.0 433.1 L690.0 438.0 L691.0 433.1" stroke="#c530c2" stroke-width="1.3" fill="none"/>
<rect x="688.7" y="436.7" width="2.6" height="2.6" fill="#c530c2"/>
<path d="M799.0 433.1 L800.0 438.0 L801.0 433.1" stroke="#c530c2" stroke-width="1.3" fill="none"/>
<rect x="798.7" y="436.7" width="2.6" height="2.6" fill="#c530c2"/>
<rect x="152.4" y="436.4" width="2.2" height="2.2" fill="#c530c2"/>
<rect x="642.7" y="436.4" width="2.2" height="2.2" fill="#c530c2"/>
<rect x="521.8" y="436.4" width="2.2" height="2.2" fill="#c530c2"/>
<rect x="157.2" y="436.4" width="2.2" height="2.2" fill="#c530c2"/>
<rect x="634.3" y="436.4" width="2.2" height="2.2" fill="#c530c2"/>
<rect x="460.0" y="436.4" width="2.2" height="2.2" fill="#c530c2"/>
<rect x="822.8" y="436.4" width="2.2" height="2.2" fill="#c530c2"/>
<rect x="54.6" y="436.4" width="2.2" height="2.2" fill="#c530c2"/>
<rect x="372.5" y="436.4" width="2.2" height="2.2" fill="#c530c2"/>
<rect x="463.0" y="436.4" width="2.2" height="2.2" fill="#c530c2"/>
<rect x="123.5" y="436.4" width="2.2" height="2.2" fill="#c530c2"/>
<rect x="486.9" y="436.4" width="2.2" height="2.2" fill="#c530c2"/>
<rect x="421.0" y="436.4" width="2.2" height="2.2" fill="#c530c2"/>
<rect x="783.6" y="436.4" width="2.2" height="2.2" fill="#c530c2"/>
<rect x="811.8" y="436.4" width="2.2" height="2.2" fill="#c530c2"/>
<rect x="583.6" y="436.4" width="2.2" height="2.2" fill="#c530c2"/>
<rect x="612.7" y="436.4" width="2.2" height="2.2" fill="#c530c2"/>
<rect x="815.3" y="436.4" width="2.2" height="2.2" fill="#c530c2"/>
<rect x="530.9" y="436.4" width="2.2" height="2.2" fill="#c530c2"/>
<rect x="283.2" y="436.4" width="2.2" height="2.2" fill="#c530c2"/>
<rect x="144.9" y="436.4" width="2.2" height="2.2" fill="#c530c2"/>
<rect x="720.9" y="436.4" width="2.2" height="2.2" fill="#c530c2"/>
<rect x="379.1" y="436.4" width="2.2" height="2.2" fill="#c530c2"/>
<rect x="119.3" y="436.4" width="2.2" height="2.2" fill="#c530c2"/>
<rect x="229.7" y="436.4" width="2.2" height="2.2" fill="#c530c2"/>
<rect x="293.5" y="436.4" width="2.2" height="2.2" fill="#c530c2"/>
<rect x="792.1" y="436.4" width="2.2" height="2.2" fill="#c530c2"/>
<rect x="773.9" y="436.4" width="2.2" height="2.2" fill="#c530c2"/>
<rect x="222.7" y="436.4" width="2.2" height="2.2" fill="#c530c2"/>
<rect x="177.4" y="436.4" width="2.2" height="2.2" fill="#c530c2"/>
<rect x="509.6" y="436.4" width="2.2" height="2.2" fill="#c530c2"/>
<rect x="829.9" y="436.4" width="2.2" height="2.2" fill="#c530c2"/>
<rect x="628.7" y="436.4" width="2.2" height="2.2" fill="#c530c2"/>
<rect x="495.7" y="436.4" width="2.2" height="2.2" fill="#c530c2"/>
<rect x="765.2" y="436.4" width="2.2" height="2.2" fill="#c530c2"/>
<rect x="743.6" y="436.4" width="2.2" height="2.2" fill="#c530c2"/>
<rect x="774.5" y="436.4" width="2.2" height="2.2" fill="#c530c2"/>
<rect x="190.6" y="436.4" width="2.2" height="2.2" fill="#c530c2"/>
<rect x="724.5" y="436.4" width="2.2" height="2.2" fill="#c530c2"/>
<rect x="783.5" y="436.4" width="2.2" height="2.2" fill="#c530c2"/>
<rect x="218.8" y="436.4" width="2.2" height="2.2" fill="#c530c2"/>
<rect x="348.2" y="436.4" width="2.2" height="2.2" fill="#c530c2"/>
<rect x="90.5" y="436.4" width="2.2" height="2.2" fill="#c530c2"/>
<rect x="379.2" y="436.4" width="2.2" height="2.2" fill="#c530c2"/>
<rect x="244.8" y="436.4" width="2.2" height="2.2" fill="#c530c2"/>
</svg>
<div class="abs" style="left:16.5px;top:497px;font-size:7.5px;font-weight:bold;color:#222;transform:rotate(-90deg);transform-origin:center">FPS</div>
<div class="abs" style="left:848px;top:481.5px;font-size:8px;font-weight:bold;color:#222;transform:rotate(90deg)">Jank</div>

<!-- slider -->
<div class="abs" style="left:57px;top:592px;width:772px;height:9px;background:#3ab2ef"></div>
<div class="abs" style="left:49.5px;top:590px;width:14px;height:13px;border:1px solid #b4b4b8;border-radius:2px;background:#f6f6f8"><svg class="abs" style="left:4px;top:3px" width="6" height="6"><path d="M0.8 0.5v5M3 0.5v5M5.2 0.5v5" stroke="#555a66" stroke-width="0.9"/></svg></div>
<div class="abs" style="left:822.5px;top:590px;width:14px;height:13px;border:1px solid #b4b4b8;border-radius:2px;background:#f6f6f8"><svg class="abs" style="left:4px;top:3px" width="6" height="6"><path d="M0.8 0.5v5M3 0.5v5M5.2 0.5v5" stroke="#555a66" stroke-width="0.9"/></svg></div>

<!-- legend -->
<div class="abs" style="left:0;top:607px;width:890px;height:12px;font-size:8.5px;color:#444">
  <span class="abs" style="left:215px;top:4.5px;width:11px;height:3px;background:#c03cc0"></span><span class="abs" style="left:218px;top:3.5px;width:5px;height:5px;border-radius:50%;border:1.2px solid #c03cc0;background:#fff"></span><span class="abs" style="left:231px;top:0">FPS</span>
  <span class="abs" style="left:257px;top:4.5px;width:11px;height:3px;background:#3aa53a"></span><span class="abs" style="left:274px;top:0">Smooth</span>
  <span class="abs" style="left:316px;top:4.5px;width:11px;height:3px;background:#1aa29a"></span><span class="abs" style="left:333px;top:0">1%Low(FPS)</span>
  <span class="abs" style="left:391px;top:4.5px;width:11px;height:3px;background:#2a3ee0"></span><span class="abs" style="left:408px;top:0">SmallJank</span>
  <span class="abs" style="left:458px;top:4.5px;width:11px;height:3px;background:#f07a2a"></span><span class="abs" style="left:461px;top:3.5px;width:5px;height:5px;border-radius:50%;border:1.2px solid #f07a2a;background:#fff"></span><span class="abs" style="left:475px;top:0">Jank</span>
  <span class="abs" style="left:505px;top:4.5px;width:11px;height:3px;background:#e02020"></span><span class="abs" style="left:508px;top:3.5px;width:5px;height:5px;border-radius:50%;border:1.2px solid #e02020;background:#fff"></span><span class="abs" style="left:523px;top:0">BigJank</span>
  <span class="abs" style="left:564px;top:4.5px;width:11px;height:3px;background:#3a8af0"></span><span class="abs" style="left:581px;top:0">Stutter</span>
  <span class="abs" style="left:616px;top:4.5px;width:11px;height:3px;background:#22c8e0"></span><span class="abs" style="left:633px;top:0">InterFrame</span>
  <span class="abs" style="left:786px;top:0;color:#2a62e0">全隐藏</span>
</div>
<div class="wm" style="left:172px;top:147px">PerfDog</div>
<div class="wm" style="left:431px;top:147px">PerfDog</div>
<div class="wm" style="left:690px;top:147px">PerfDog</div>
<div class="wm" style="left:172px;top:372px">PerfDog</div>
<div class="wm" style="left:431px;top:372px">PerfDog</div>
<div class="wm" style="left:690px;top:372px">PerfDog</div>
<div class="abs" style="left:761px;top:620px;width:36px;height:2px;background:#c8c8cc"></div>
</body></html>
